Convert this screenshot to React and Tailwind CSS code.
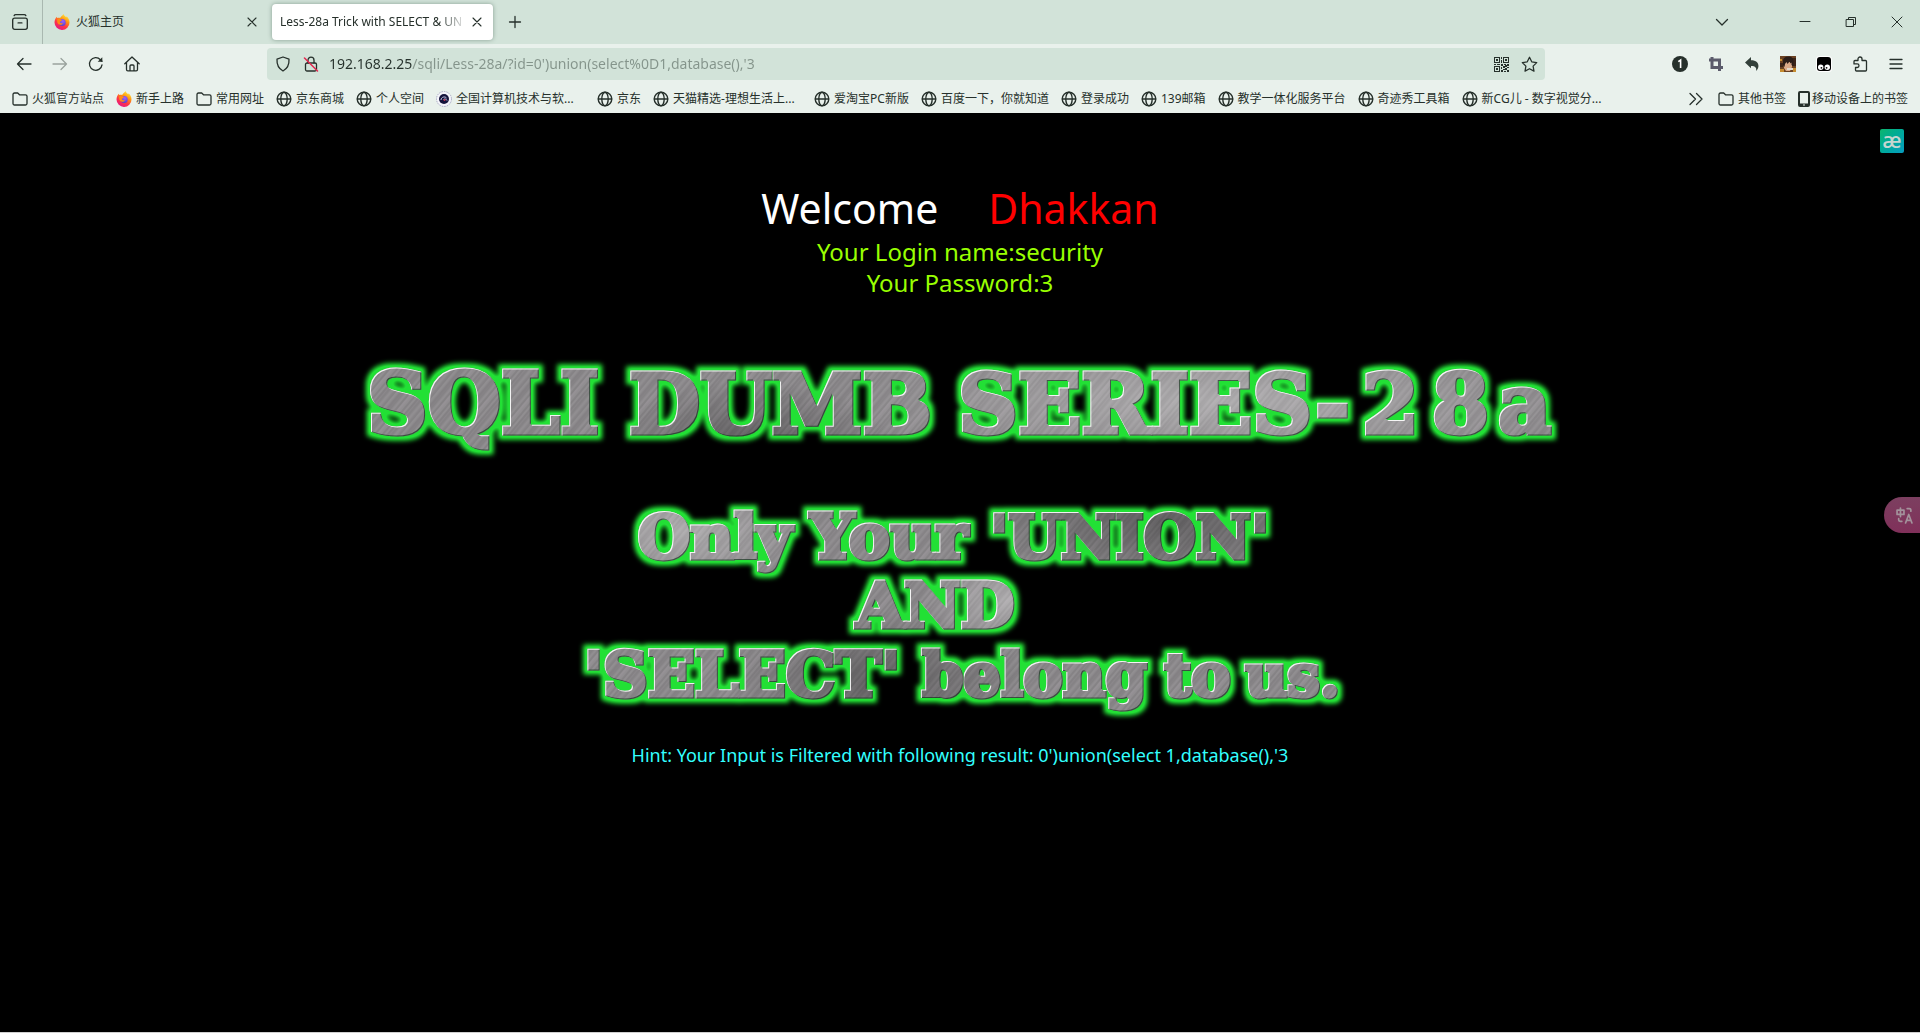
import React from "react";

const UI = "font-['Noto_Sans','Noto_Sans_CJK_SC',sans-serif]";

function Stroke({ size = 16, width = 1.3, className = "", children }) {
  return (
    <svg
      viewBox="0 0 16 16"
      width={size}
      height={size}
      fill="none"
      stroke="currentColor"
      strokeWidth={width}
      strokeLinecap="round"
      strokeLinejoin="round"
      className={"shrink-0 " + className}
      aria-hidden="true"
    >
      {children}
    </svg>
  );
}

const Close = () => (
  <Stroke size={16} width={1.1}>
    <path d="M4 4l8 8M12 4l-8 8" />
  </Stroke>
);

const Folder = () => (
  <Stroke size={16}>
    <path d="M1 3.6C1 2.700 1.600 2 2.500 2h3.200l1.800 1.800h6c.9 0 1.500.6 1.500 1.500v7.200c0 .9-.6 1.500-1.500 1.500h-11C1.600 14 1 13.400 1 12.500z" />
  </Stroke>
);

const Globe = () => (
  <Stroke size={16} width={1.4}>
    <circle cx="8" cy="8" r="6.800" />
    <ellipse cx="8" cy="8" rx="3.200" ry="6.800" />
    <path d="M1.500 8h13" />
  </Stroke>
);

const Firefox = () => (
  <svg viewBox="0 0 16 16" width="16" height="16" className="shrink-0" aria-hidden="true">
    <defs>
      <linearGradient id="ffBody" x1="0.8" y1="0" x2="0.25" y2="1">
        <stop offset="0" stopColor="#fff44f" />
        <stop offset="0.35" stopColor="#ff980e" />
        <stop offset="0.65" stopColor="#ff3647" />
        <stop offset="1" stopColor="#e31587" />
      </linearGradient>
      <radialGradient id="ffCore" cx="0.6" cy="0.3" r="0.8">
        <stop offset="0" stopColor="#a060ff" />
        <stop offset="1" stopColor="#4a3fc4" />
      </radialGradient>
    </defs>
    <path
      fill="url(#ffBody)"
      d="M9.500 0c.4 1.600 1.500 2.200 2.800 3.300.2-.3.300-.7.300-1 1.700 1.600 2.900 3.600 2.900 6.100A7.400 7.400 0 0 1 8 15.900 7.400 7.400 0 0 1 .500 8.600c0-2.400.9-4.600 2.300-5.900.1.600.3 1 .6 1.400 1-.4 1.800-.4 2.700-.1C7 2.500 8.300 1.700 9.500 0z"
    />
    <circle cx="8.200" cy="8.500" r="3.500" fill="url(#ffCore)" />
    <path fill="#ff8a16" d="M3.300 5.300C5 4.600 6.800 5 8 6.200c-.4.900-1.900 1-2.200 1.900.5 1.300 2 1.500 3.300.8-.8 2.100-3.800 2.600-5.100.9C3.100 8.500 2.900 6.800 3.300 5.300z" />
  </svg>
);

const Badge = () => (
  <svg viewBox="0 0 16 16" width="16" height="16" className="shrink-0" aria-hidden="true">
    <circle cx="8" cy="8" r="7.500" fill="#f4f4fa" stroke="#a9a9c4" strokeDasharray="1.500 1" />
    <circle cx="8" cy="8" r="5" fill="#14143c" />
    <path d="M5 9c0-3 4-4 5.500-2M7.500 8.500c1-1 3-.5 3.500 1" stroke="#c4c4e6" fill="none" />
    <circle cx="8.500" cy="9" r="1" fill="#c23a52" />
  </svg>
);

const bookmarkIcons = { folder: Folder, globe: Globe, firefox: Firefox, badge: Badge };

const bookmarks = [
  ["folder", "火狐官方站点"],
  ["firefox", "新手上路"],
  ["folder", "常用网址"],
  ["globe", "京东商城"],
  ["globe", "个人空间"],
  ["badge", "全国计算机技术与软...", true],
  ["globe", "京东"],
  ["globe", "天猫精选-理想生活上...", true],
  ["globe", "爱淘宝PC新版"],
  ["globe", "百度一下，你就知道"],
  ["globe", "登录成功"],
  ["globe", "139邮箱"],
  ["globe", "教学一体化服务平台"],
  ["globe", "奇迹秀工具箱"],
  ["globe", "新CG儿 - 数字视觉分...", true],
];

function IconButton({ label, className = "w-9", children }) {
  return (
    <button type="button" aria-label={label} className={"flex h-8 shrink-0 items-center justify-center " + className}>
      {children}
    </button>
  );
}

function TabBar() {
  return (
    <div className="flex h-11 items-center bg-[#d2e3d9]">
      <IconButton label="标签页概览" className="w-[42px] pr-[2px]">
        <Stroke size={18} width={1.2}>
          <rect x="1.500" y="4.500" width="13" height="10" rx="1.800" />
          <path d="M2.800 2.300C3.100 1.700 3.600 1.500 4.200 1.500h7.600c.6 0 1.100.2 1.400.8M6.300 8.800h3.400" />
        </Stroke>
      </IconButton>
      <div className="flex h-11 w-[2px] shrink-0 border-l border-[#a9b8b0]" />
      <div className="flex h-9 w-[224px] shrink-0 items-center pl-[10px] pr-1">
        <Firefox />
        <button type="button" className="flex-1 pl-[6px] text-left text-xs">火狐主页</button>
        <IconButton label="关闭标签页" className="w-6"><Close /></IconButton>
      </div>
      <div className="ml-1 flex h-9 w-[221px] shrink-0 items-center rounded bg-white pl-2 pr-[6px] shadow-[0_0_4px_rgba(60,90,75,0.5)]">
        <button type="button" className="min-w-0 flex-1 overflow-hidden whitespace-nowrap text-left text-xs [mask-image:linear-gradient(to_right,black_85%,transparent)]">
          Less-28a Trick with SELECT &amp; UN
        </button>
        <IconButton label="关闭标签页" className="w-5"><Close /></IconButton>
      </div>
      <IconButton label="新建标签页" className="ml-1 w-9">
        <Stroke width={1.3}><path d="M8 2.500v11M2.500 8h11" /></Stroke>
      </IconButton>
      <div className="flex-1" />
      <IconButton label="列出所有标签页" className="mr-[42px] w-9">
        <Stroke><path d="M2.500 5.500L8 11l5.500-5.500" /></Stroke>
      </IconButton>
      <IconButton label="最小化" className="w-[46px]">
        <Stroke size={16} width={1}><path d="M3 7.500h10" /></Stroke>
      </IconButton>
      <IconButton label="还原" className="w-[46px]">
        <Stroke size={16} width={1}>
          <rect x="3.500" y="5.500" width="7" height="7" />
          <path d="M5.500 5.500v-2h7v7h-2" />
        </Stroke>
      </IconButton>
      <IconButton label="关闭" className="w-[46px]">
        <Stroke size={16} width={1}><path d="M3 3l10 10M13 3L3 13" /></Stroke>
      </IconButton>
    </div>
  );
}

const Qr = () => (
  <svg viewBox="0 0 15 15" width="15" height="15" fill="currentColor" shapeRendering="crispEdges" aria-hidden="true">
    <path fillRule="evenodd" d="M0 0h6v6H0zM1 1v4h4V1zM9 0h6v6H9zM10 1v4h4V1zM0 9h6v6H0zM1 10v4h4v-4z" />
    <path d="M2 2h2v2H2zM11 2h2v2h-2zM2 11h2v2H2zM7 0h1v2H7zM7 3h1v3H7zM0 7h2v1H0zM3 7h3v1H3zM7 7h2v2H7zM10 7h2v1h-2zM13 7h2v2h-2zM9 9h2v2H9zM11 8h2v2h-2zM7 10h1v2H7zM11 11h2v2h-2zM13 10h2v1h-2zM9 12h2v1H9zM7 13h2v2H7zM10 14h2v1h-2zM13 13h2v2h-2z" />
  </svg>
);

function NavBar() {
  return (
    <div className="flex h-10 items-center pl-[6px] pr-[6px]">
      <IconButton label="后退"><Stroke><path d="M15 8H1.500M7 2.500L1.500 8 7 13.500" /></Stroke></IconButton>
      <IconButton label="前进"><Stroke className="opacity-40"><path d="M1 8h13.500M9 2.500L14.500 8 9 13.500" /></Stroke></IconButton>
      <IconButton label="刷新">
        <Stroke><path d="M14 8.800A6.300 6.300 0 1 1 12.400 3.700L14 5.300" /><path d="M14.300 1.200v4.600H9.700z" fill="currentColor" stroke="none" /></Stroke>
      </IconButton>
      <IconButton label="主页">
        <Stroke><path d="M.8 7.700L8 1l7.200 6.700M2.500 6.500v7c0 .8.500 1.300 1.300 1.300h8.400c.8 0 1.300-.5 1.300-1.300v-7M6 14.500V10c0-.6.400-1 1-1h2c.6 0 1 .4 1 1v4.500" /></Stroke>
      </IconButton>
      <form className="mx-[117px] flex h-8 min-w-0 flex-1 items-center rounded bg-[#d2e3d9]" onSubmit={(e) => e.preventDefault()}>
        <IconButton label="跟踪保护" className="w-8">
          <Stroke><path d="M8 1l6 2.200c.3 5-1.600 9.300-6 11.800C3.600 12.500 1.700 8.200 2 3.200z" /></Stroke>
        </IconButton>
        <IconButton label="连接不安全" className="w-6">
          <Stroke>
            <path d="M5 7V4.200a3 3 0 0 1 6 0V7" />
            <rect x="2.500" y="7" width="11" height="8" rx="1.500" />
            <path d="M1.500 2l13 13" stroke="#e22850" strokeWidth="1.500" />
          </Stroke>
        </IconButton>
        <input
          type="text"
          aria-label="网址"
          defaultValue="192.168.2.25/sqli/Less-28a/?id=0')union(select%0D1,database(),'3"
          className="ml-[6px] h-8 min-w-0 flex-1 bg-[linear-gradient(to_right,#26322c_83px,#84948b_83px)] bg-clip-text pb-[2px] text-sm text-transparent outline-none"
        />
        <IconButton label="二维码" className="w-7"><Qr /></IconButton>
        <IconButton label="收藏" className="mr-[2px] w-7">
          <Stroke size={17} width={1.200}><path d="M8 1.200l2.100 4.300 4.700.7-3.400 3.300.8 4.700L8 12l-4.200 2.200.8-4.700L1.200 6.200l4.700-.7z" /></Stroke>
        </IconButton>
      </form>
      <IconButton label="通知">
        <svg viewBox="0 0 16 16" width="16" height="16" aria-hidden="true">
          <circle cx="8" cy="8" r="8" fill="#26302b" />
          <path d="M6.300 5.700L8.600 4v8" fill="none" stroke="white" strokeWidth="1.600" />
        </svg>
      </IconButton>
      <IconButton label="截图">
        <svg viewBox="0 0 16 16" width="16" height="16" fill="none" stroke="#5b5b6b" strokeWidth="3" aria-hidden="true">
          <path d="M4 1v10.500h11M1 4h10.500v11" />
        </svg>
      </IconButton>
      <IconButton label="撤销">
        <svg viewBox="0 0 16 16" width="16" height="16" fill="#33403a" aria-hidden="true">
          <path d="M1 6.500L7 1v3.300c5 0 8 2.700 7.400 6.500-.2 1.500-1 3-2.300 4.200.6-3-.4-5-5.100-5V12.200z" />
        </svg>
      </IconButton>
      <IconButton label="头像扩展">
        <svg viewBox="0 0 16 16" width="16" height="16" aria-hidden="true">
          <path fill="#6b4223" d="M0 0h16v16H0z" />
          <path fill="#3c2418" d="M12 2h4v8h-4zM0 7h3v4H0z" />
          <path fill="#c58c30" d="M0 13h4v3H0zM13 12h3v4h-3zM0 3h2v2H0z" />
          <path fill="#d9a988" d="M4 6h8v5l-2 4H6l-2-3z" />
          <path fill="#2a1c17" d="M3 9V5C3 2 5 .500 8.500 .500S13 2.500 13.500 5v5l-2-1V6.500l-1 1-1-2-2 2.500-1-2-1.500 2-.5 3z" />
          <path fill="#e3d9cb" d="M7 12h6v2H7z" />
        </svg>
      </IconButton>
      <IconButton label="脚本管理">
        <svg viewBox="0 0 16 16" width="16" height="16" aria-hidden="true">
          <rect width="16" height="16" rx="3.500" fill="white" />
          <rect x="1" y="1" width="14" height="14" rx="3" fill="black" />
          <circle cx="4.700" cy="11.200" r="2.700" fill="white" />
          <circle cx="11.300" cy="11.200" r="2.700" fill="white" />
          <circle cx="5.400" cy="11.800" r="0.900" />
          <circle cx="10.600" cy="11.800" r="0.900" />
        </svg>
      </IconButton>
      <IconButton label="扩展">
        <Stroke><path d="M6 4.500V3a2 2 0 0 1 4 0v1.500h3.500c.6 0 1 .4 1 1V14c0 .6-.4 1-1 1h-9c-.6 0-1-.4-1-1v-2.500h1.700a1.800 1.800 0 0 0 0-3.600H2V5.500c0-.6.400-1 1-1z" /></Stroke>
      </IconButton>
      <IconButton label="菜单"><Stroke><path d="M2 3.500h12M2 8h12M2 12.500h12" /></Stroke></IconButton>
    </div>
  );
}

function BookmarksBar() {
  return (
    <nav aria-label="书签" className="flex h-[29px] items-center justify-between pl-3 pr-3 text-xs whitespace-nowrap">
      <div className="flex min-w-0 gap-3">
        {bookmarks.map(([icon, label, wide]) => {
          const Icon = bookmarkIcons[icon];
          return (
            <a key={label} href="#" className="flex shrink-0 items-center gap-1">
              <Icon />
              <span className={wide ? "w-[129px]" : ""}>{label}</span>
            </a>
          );
        })}
      </div>
      <div className="flex items-center gap-3">
        <IconButton label="更多书签" className="w-5">
          <Stroke><path d="M2 2.500L7.500 8 2 13.500M8.500 2.500L14 8l-5.500 5.500" /></Stroke>
        </IconButton>
        <a href="#" className="flex items-center gap-1"><Folder />其他书签</a>
        <a href="#" className="flex items-center gap-[2px]">
          <svg viewBox="0 0 12 16" width="12" height="16" aria-hidden="true">
            <path fill="#26302b" fillRule="evenodd" d="M2 0h8a2 2 0 0 1 2 2v12a2 2 0 0 1-2 2H2a2 2 0 0 1-2-2V2a2 2 0 0 1 2-2zM2 2v10.500h8V2zM5 13.500v1h2v-1z" />
          </svg>
          移动设备上的书签
        </a>
      </div>
    </nav>
  );
}

const bannerWords = [
  ["SQLI", 7, 82, 84],
  ["DUMB", 269, 82, 82],
  ["SERIES-", 598, 82, 83],
  ["2", 1002, 82, 82],
  ["8", 1072, 82, 82],
  ["a", 1138, 82, 82],
  ["Only", 278, 207, 60],
  ["Your", 450, 207, 62],
  ["'UNION'", 630, 207, 60],
  ["AND", 496, 276, 62],
  ["'SELECT'", 224, 345, 62],
  ["belong", 562, 345, 59],
  ["to", 804, 345, 59],
  ["us.", 885, 345, 58],
];

function Banner() {
  return (
    <svg viewBox="0 0 1200 390" className="w-full max-w-[1200px]">
      <defs>
        <pattern id="brush" width="31" height="400" patternUnits="userSpaceOnUse" patternTransform="rotate(40)">
          <rect width="31" height="400" fill="#8b888b" />
          <path d="M1 0v400M7 0v400M11 0v400M19 0v400M24 0v400" stroke="#989598" strokeWidth="0.800" />
          <path d="M3 0v400M9 0v400M16 0v400M22 0v400M29 0v400" stroke="#7e7b7e" strokeWidth="0.800" />
          <path d="M5 0v400" stroke="#aaa7aa" strokeWidth="0.600" />
          <path d="M13 0v400M27 0v400" stroke="#727072" strokeWidth="0.600" />
        </pattern>
        <radialGradient id="dark">
          <stop offset="0" stopColor="#222" stopOpacity="0.4" />
          <stop offset="1" stopColor="#222" stopOpacity="0" />
        </radialGradient>
        <radialGradient id="light">
          <stop offset="0" stopColor="#fff" stopOpacity="0.3" />
          <stop offset="1" stopColor="#fff" stopOpacity="0" />
        </radialGradient>
        <pattern id="metal" width="1200" height="390" patternUnits="userSpaceOnUse">
          <rect width="1200" height="390" fill="url(#brush)" />
          <ellipse cx="390" cy="90" rx="140" ry="60" fill="url(#dark)" />
          <ellipse cx="800" cy="170" rx="220" ry="70" fill="url(#dark)" />
          <ellipse cx="520" cy="330" rx="150" ry="70" fill="url(#dark)" />
          <ellipse cx="860" cy="50" rx="380" ry="70" fill="url(#light)" />
          <ellipse cx="320" cy="180" rx="130" ry="60" fill="url(#light)" />
          <ellipse cx="650" cy="250" rx="90" ry="50" fill="url(#light)" />
        </pattern>
        <filter id="glow" x="0" y="0" width="1200" height="390" filterUnits="userSpaceOnUse" colorInterpolationFilters="sRGB">
          <feMorphology in="SourceAlpha" operator="dilate" radius="4" result="fat" />
          <feGaussianBlur in="fat" stdDeviation="2.500" result="soft" />
          <feComponentTransfer in="soft" result="halo"><feFuncA type="linear" slope="1.200" /></feComponentTransfer>
          <feFlood floodColor="#22e035" />
          <feComposite in2="halo" operator="in" result="green" />
          <feOffset in="SourceAlpha" dx="1" dy="1" result="down" />
          <feFlood floodColor="#ffffff" floodOpacity="0.9" />
          <feComposite in2="SourceAlpha" operator="in" />
          <feComposite in2="down" operator="out" result="shine" />
          <feOffset in="SourceAlpha" dx="-1" dy="-1" result="up" />
          <feFlood floodColor="#103018" floodOpacity="0.65" />
          <feComposite in2="SourceAlpha" operator="in" />
          <feComposite in2="up" operator="out" result="shade" />
          <feMerge>
            <feMergeNode in="green" />
            <feMergeNode in="SourceGraphic" />
            <feMergeNode in="shade" />
            <feMergeNode in="shine" />
          </feMerge>
        </filter>
      </defs>
      <g filter="url(#glow)" fill="url(#metal)" stroke="url(#metal)" strokeWidth="5" fontWeight="bold" className="font-['DejaVu_Serif',serif]">
        {bannerWords.map(([word, x, y, size]) => (
          <text key={word} x={x} y={y} fontSize={size}>{word}</text>
        ))}
      </g>
    </svg>
  );
}

export default function App() {
  return (
    <div className={"flex min-h-screen flex-col border-b border-[#d0d0d0] bg-black text-[#26302b] " + UI}>
      <header className="bg-[#e9f1ec]">
        <TabBar />
        <NavBar />
        <BookmarksBar />
      </header>
      <main className="relative flex flex-1 flex-col items-center pt-[68px] text-center">
        <h1 className="flex gap-[50px] text-[41px] leading-[55px] text-white">
          <span>Welcome</span>
          <span className="text-[#ff0000]">Dhakkan</span>
        </h1>
        <p className="text-2xl leading-[31px] text-[#99ff00]">
          Your Login name:security
          <br />
          Your Password:3
        </p>
        <div className="mt-[53px] flex w-full justify-center">
          <Banner />
        </div>
        <p className="mt-[2px] text-lg leading-6 text-[#33ffff]">
          Hint: Your Input is Filtered with following result: 0')union(select 1,database(),'3
        </p>
        <button type="button" aria-label="翻译助手" className="absolute right-4 top-4 flex h-6 w-6 items-center justify-center rounded-[2px] bg-linear-to-br from-[#0fb56c] to-[#0a9cc0] text-[22px] leading-none font-medium text-[#c5d6d0]">
          <span className="-mt-1">æ</span>
        </button>
        <button type="button" aria-label="翻译" className="absolute right-0 top-[384px] flex h-9 w-9 items-center justify-center rounded-l-full bg-linear-to-b from-[#7c3f60] to-[#80305a] pl-1 text-[#a3929b]">
          <Stroke size={17} width={1.600}>
            <path d="M1 3h6.500v4H1zM4.200 1v8M10.500 1.500h2c1 0 1.500.5 1.500 1.500v1M2.500 11v1c0 1 .5 1.500 1.500 1.500h1.500M9 15l3-8 3 8M10 12.500h4" />
          </Stroke>
        </button>
      </main>
    </div>
  );
}
